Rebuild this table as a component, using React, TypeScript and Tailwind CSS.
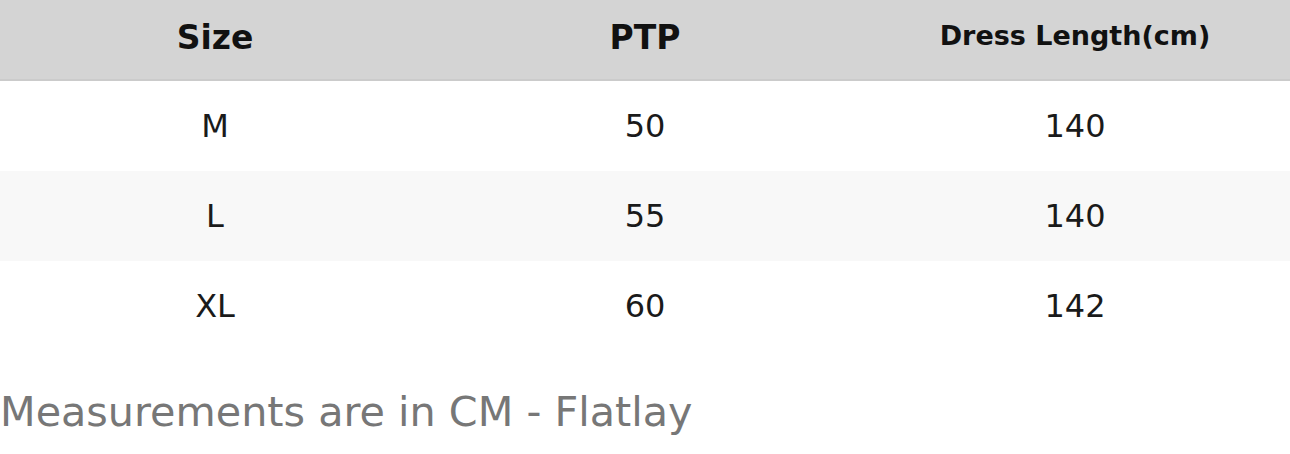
const rows = [
  { size: 'M', ptp: '50', length: '140' },
  { size: 'L', ptp: '55', length: '140' },
  { size: 'XL', ptp: '60', length: '142' },
];

export default function App() {
  return (
    <div
      className="w-[1290px] h-[454px] bg-white overflow-hidden"
      style={{ fontFamily: '"DejaVu Sans", Verdana, sans-serif' }}
    >
      <div className="grid grid-cols-3 h-[81px] bg-[#d4d4d4] border-b-2 border-[#cbcbcb] text-[#111]">
        <div className="flex items-center justify-center pb-[4px] text-[33px] font-bold">Size</div>
        <div className="flex items-center justify-center pb-[4px] text-[33px] font-bold">PTP</div>
        <div className="flex items-center justify-center pb-[6px] text-[27px] font-bold">Dress Length(cm)</div>
      </div>

      {rows.map((r, i) => (
        <div
          key={r.size}
          className={`grid grid-cols-3 h-[90px] text-[32px] text-[#1a1a1a] ${
            i % 2 === 1 ? 'bg-[#f8f8f8]' : 'bg-white'
          }`}
        >
          <div className="flex items-center justify-center">{r.size}</div>
          <div className="flex items-center justify-center">{r.ptp}</div>
          <div className="flex items-center justify-center">{r.length}</div>
        </div>
      ))}

      <p className="mt-[37px] text-[41.3px] leading-[48px] text-[#777777]">
        Measurements are in CM - Flatlay
      </p>
    </div>
  );
}
